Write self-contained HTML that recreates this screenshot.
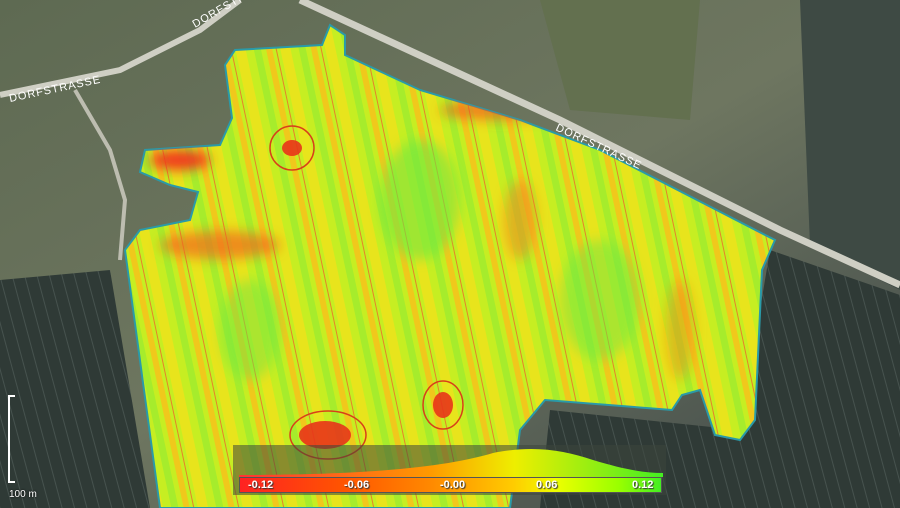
<!DOCTYPE html>
<html><head><meta charset="utf-8"><style>
body{margin:0;width:900px;height:508px;overflow:hidden;background:#4a5744;font-family:"Liberation Sans",sans-serif}
#w{position:relative;width:900px;height:508px}
svg{position:absolute;left:0;top:0}
.leg{position:absolute;left:233px;top:445px;width:433px;height:50px;background:rgba(60,70,60,.55)}
.bar{position:absolute;left:6px;top:32px;width:421px;height:14px;border:1px solid #555;background:linear-gradient(90deg,#f22 0%,#f50 25%,#f80 45%,#fc0 65%,#ef0 75%,#9f0 90%,#4e2 100%)}
.bar span{position:absolute;top:0;font-size:11px;font-weight:bold;color:#fff;text-shadow:1px 1px 1px #333;line-height:14px}
.sc{position:absolute;left:8px;top:395px;width:4px;height:88px;border-left:2px solid #fff;}
.sc:before,.sc:after{content:"";position:absolute;left:0;width:5px;border-top:2px solid #fff}
.sc:before{top:0}.sc:after{bottom:0}
.st{position:absolute;left:9px;top:489px;font-size:10px;color:#fff;text-shadow:0 0 2px #000}
</style></head><body><div id="w">
<svg width="900" height="508" viewBox="0 0 900 508">
<defs>
<linearGradient id="bg" x1="0" y1="0" x2="1" y2="1"><stop offset="0" stop-color="#5e6a52"/><stop offset=".5" stop-color="#6e7660"/><stop offset="1" stop-color="#3d4648"/></linearGradient>
<pattern id="fs" width="12" height="12" patternUnits="userSpaceOnUse" patternTransform="rotate(-15)"><rect width="12" height="12" fill="#2f3a36"/><line x1="0" y1="0" x2="0" y2="12" stroke="#46524e" stroke-width="2"/></pattern>
<pattern id="hs" width="44" height="44" patternUnits="userSpaceOnUse" patternTransform="rotate(-12)"><rect width="44" height="44" fill="#c6ee22"/><rect x="0" width="10" height="44" fill="#e8e41c"/><rect x="18" width="7" height="44" fill="#a6ec2c"/><rect x="30" width="6" height="44" fill="#f0c81c"/><line x1="40" y1="0" x2="40" y2="44" stroke="#e8802a" stroke-width="1"/></pattern>
<filter id="bl"><feGaussianBlur stdDeviation="6"/></filter>
<clipPath id="cf"><polygon points="225,65 235,50 322,45 330,25 345,35 345,55 420,90 520,120 600,150 775,240 762,270 755,420 740,440 715,435 700,390 682,395 672,410 545,400 520,430 510,508 160,508 125,250 140,230 190,220 198,192 170,185 140,172 145,150 220,145 232,118"/></clipPath>
</defs>
<rect width="900" height="508" fill="url(#bg)"/>
<polygon points="0,280 110,270 150,508 0,508" fill="url(#fs)"/>
<polygon points="770,250 900,295 900,508 540,508 550,410 740,430" fill="url(#fs)"/>
<polygon points="800,0 900,0 900,290 810,245" fill="#3e4a44"/>
<polygon points="540,0 700,0 690,120 570,110" fill="#63704f"/>
<path d="M0,95 L120,70 L200,30 L240,0" stroke="#cfcfc4" stroke-width="6" fill="none"/>
<path d="M300,0 L560,120 L780,230 L900,285" stroke="#cfcfc4" stroke-width="7" fill="none"/>
<path d="M75,90 L110,150 L125,200 L120,260" stroke="#bdbdb0" stroke-width="4" fill="none"/>
<polygon points="225,65 235,50 322,45 330,25 345,35 345,55 420,90 520,120 600,150 775,240 762,270 755,420 740,440 715,435 700,390 682,395 672,410 545,400 520,430 510,508 160,508 125,250 140,230 190,220 198,192 170,185 140,172 145,150 220,145 232,118" fill="url(#hs)" stroke="#2a9aa8" stroke-width="2"/>
<g clip-path="url(#cf)" filter="url(#bl)">
<ellipse cx="420" cy="200" rx="40" ry="60" fill="#6ee840" opacity=".6"/>
<ellipse cx="600" cy="300" rx="40" ry="60" fill="#6ee840" opacity=".5"/>
<ellipse cx="250" cy="330" rx="30" ry="50" fill="#6ee840" opacity=".5"/>
<ellipse cx="220" cy="245" rx="60" ry="14" fill="#f06a1a" opacity=".7"/>
<ellipse cx="180" cy="160" rx="30" ry="10" fill="#f03a1a"/>
<ellipse cx="500" cy="110" rx="60" ry="10" fill="#f05a1a" opacity=".7"/>
<ellipse cx="520" cy="220" rx="16" ry="40" fill="#f08a1a" opacity=".6"/>
<ellipse cx="680" cy="330" rx="14" ry="50" fill="#f08a1a" opacity=".5"/>
</g>
<g fill="#e8341a" opacity=".9">
<ellipse cx="325" cy="435" rx="26" ry="14"/><ellipse cx="443" cy="405" rx="10" ry="13"/><ellipse cx="292" cy="148" rx="10" ry="8"/>
</g>
<g fill="none" stroke="#d8401a" stroke-width="1.5">
<ellipse cx="328" cy="435" rx="38" ry="24"/><ellipse cx="443" cy="405" rx="20" ry="24"/><ellipse cx="292" cy="148" rx="22" ry="22"/>
</g>
<text x="10" y="102" transform="rotate(-12 10 102)" font-size="11" fill="#fff" letter-spacing="1">DORFSTRASSE</text>
<text x="555" y="130" transform="rotate(25 555 130)" font-size="11" fill="#fff" letter-spacing="1">DORFSTRASSE</text>
<text x="195" y="28" transform="rotate(-30 195 28)" font-size="11" fill="#fff" letter-spacing="1">DORFSTRASSE</text>
</svg>
<div class="leg">
<svg width="433" height="32" style="position:absolute;left:0;top:0"><defs><linearGradient id="lg"><stop offset="0" stop-color="#f33"/><stop offset=".45" stop-color="#f90"/><stop offset=".65" stop-color="#ee0"/><stop offset="1" stop-color="#4e2"/></linearGradient></defs>
<path d="M6,30 C150,30 220,20 260,8 C300,0 330,5 360,15 C390,24 410,28 430,28 L430,32 L6,32Z" fill="url(#lg)"/></svg>
<div class="bar"><span style="left:8px">-0.12</span><span style="left:104px">-0.06</span><span style="left:200px">-0.00</span><span style="left:296px">0.06</span><span style="left:392px">0.12</span></div>
</div>
<div class="sc"></div><div class="st">100 m</div>
</div></body></html>
